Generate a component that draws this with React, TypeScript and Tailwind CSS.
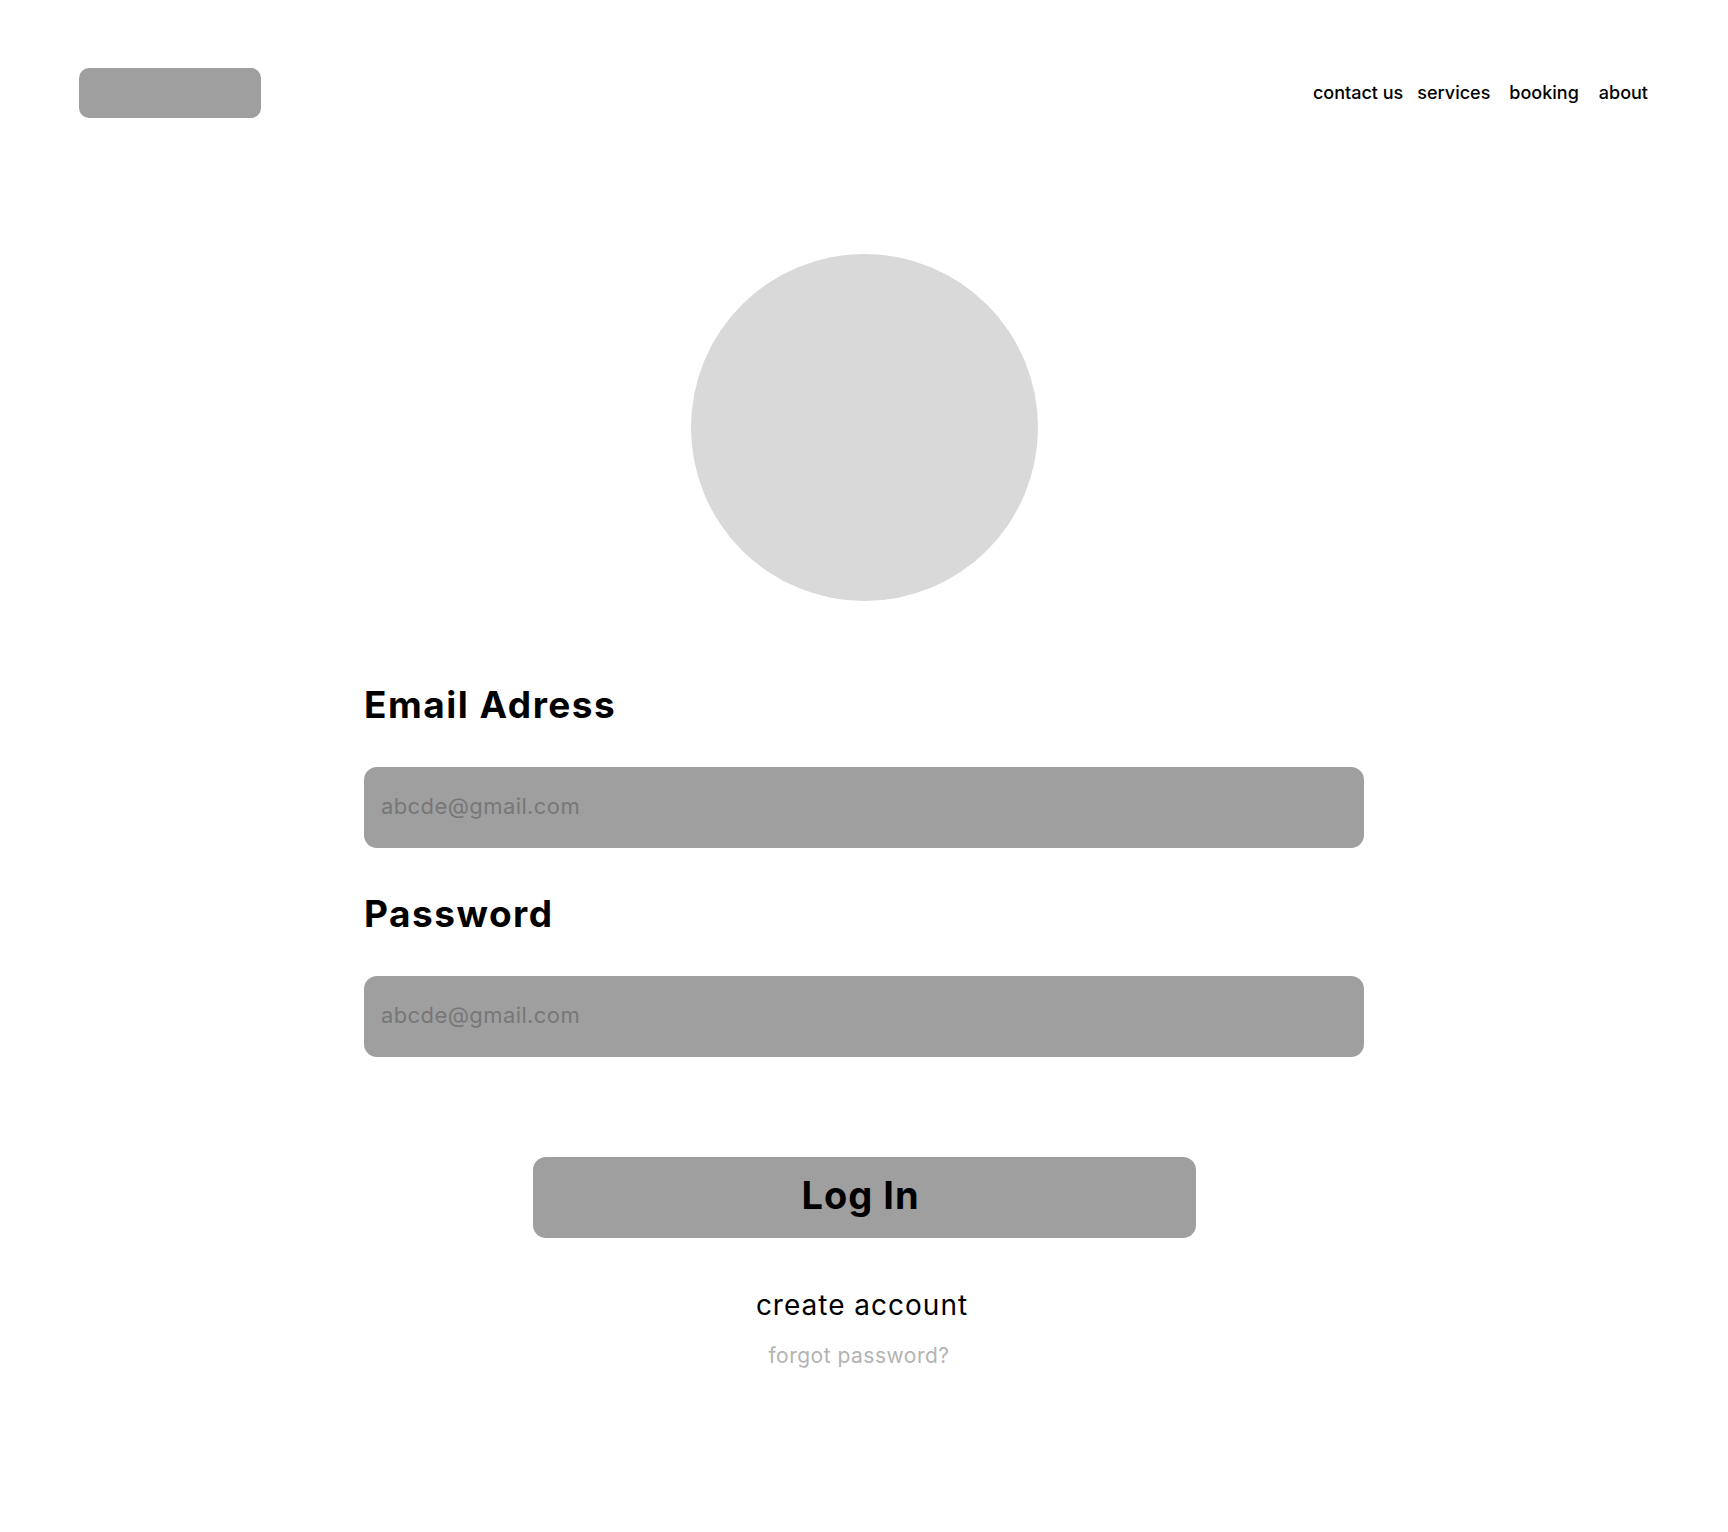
import React from "react";

const navLinks = [
  { label: "contact us", className: "" },
  { label: "services", className: "ml-[14px]" },
  { label: "booking", className: "ml-[19px]" },
  { label: "about", className: "ml-[20px]" },
];

const Field = ({ label, placeholder, type }: { label: string; placeholder: string; type: string }) => (
  <div className="flex flex-col">
    <label className="text-[37px] leading-[44px] font-bold tracking-[1.5px] text-black">{label}</label>
    <input
      type={type === "password" ? "text" : type}
      placeholder={placeholder}
      className="mt-[40px] h-[81px] w-full rounded-[13px] bg-[#9f9f9f] pb-[3px] pl-[17px] text-[22px] tracking-[0.4px] text-black outline-none placeholder:text-[#777777]"
    />
  </div>
);

const App = () => {
  return (
    <div className="min-h-screen w-full bg-white font-['Inter',sans-serif] text-black">
      <header className="flex items-center justify-between pl-[79px] pr-[80px] pt-[68px]">
        <div className="h-[50px] w-[182px] rounded-[10px] bg-[#9f9f9f]" />
        <nav className="flex items-center pb-[2px]">
          {navLinks.map((link) => (
            <a
              key={link.label}
              href="#"
              className={`text-[18px] leading-[27px] font-medium text-black ${link.className}`}
            >
              {link.label}
            </a>
          ))}
        </nav>
      </header>

      <main className="flex flex-col items-center">
        <div className="mt-[136px] h-[347px] w-[347px] rounded-full bg-[#d9d9d9]" />

        <form className="mt-[82px] flex w-[1000px] flex-col gap-[44px]">
          <Field label="Email Adress" placeholder="abcde@gmail.com" type="email" />
          <Field label="Password" placeholder="abcde@gmail.com" type="password" />
        </form>

        <button
          type="button"
          className="mt-[100px] flex h-[81px] w-[663px] items-center justify-center rounded-[13px] bg-[#9f9f9f] pb-[4px] pr-[7px] text-[38px] font-bold tracking-[1px] text-black"
        >
          Log In
        </button>

        <a href="#" className="mt-[50px] mr-[4px] text-[28px] leading-[34px] tracking-[1px] text-black">
          create account
        </a>
        <a href="#" className="mt-[22px] mr-[10px] text-[21px] leading-[24px] tracking-[0.5px] text-[#b3b3b3]">
          forgot password?
        </a>
      </main>
    </div>
  );
};

export default App;
